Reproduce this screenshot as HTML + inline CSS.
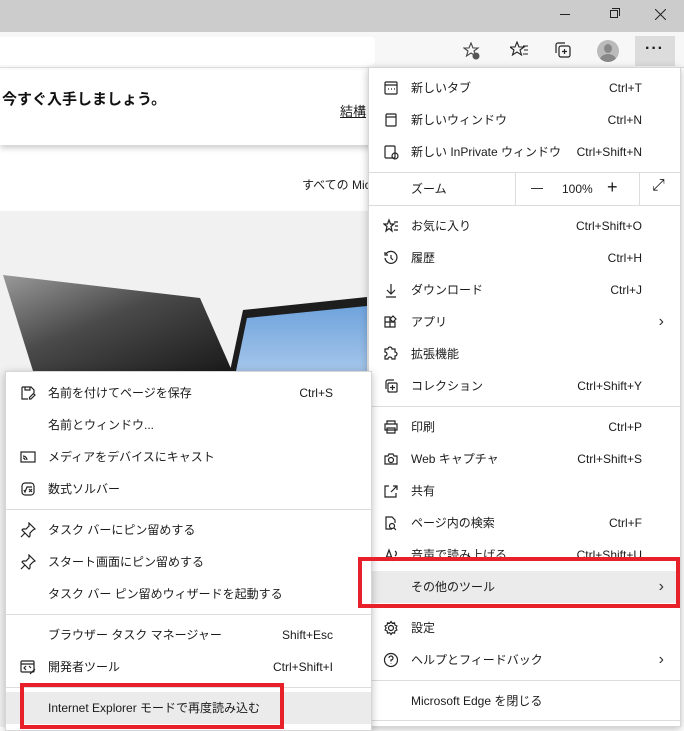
<!DOCTYPE html>
<html><head><meta charset="utf-8"><style>
*{margin:0;padding:0;box-sizing:border-box}
body{width:684px;height:727px;overflow:hidden;position:relative;background:#fff;font-family:"Liberation Sans","Noto Sans CJK JP",sans-serif;font-size:12px;color:#1b1b1b}
.a{position:absolute}
.menu{position:absolute;background:#fff;border:1px solid #d6d6d6;box-shadow:0 2px 8px rgba(0,0,0,.25)}
.it{position:absolute;left:0;right:0;height:32px;line-height:32px}
.it .t{position:absolute;left:42px}
.it .k{position:absolute;right:38px}
.it svg{position:absolute;left:14px;top:8px;width:16px;height:16px;fill:none;stroke:#222;stroke-width:1.2}
.sep{position:absolute;left:0;right:0;height:1px;background:#dcdcdc}
.hl{background:#ebebeb}
.chev{position:absolute;right:16px;top:0;color:#333;font-size:16px}
.red{position:absolute;border:4px solid #e8202a}
</style></head><body>
<div class="a" style="left:0;top:0;width:684px;height:32px;background:#cccccc"></div>
<div class="a" style="left:560px;top:14px;width:10px;height:1px;background:#222"></div>
<div class="a" style="left:610px;top:10px;width:8px;height:8px;border:1px solid #222"></div>
<div class="a" style="left:612px;top:8px;width:8px;height:8px;border-top:1px solid #222;border-right:1px solid #222"></div>
<svg class="a" style="left:655px;top:9px" width="11" height="11"><path d="M0 0L11 11M11 0L0 11" stroke="#222" stroke-width="1"/></svg>
<div class="a" style="left:0;top:32px;width:684px;height:36px;background:#f7f7f7;border-bottom:1px solid #ddd"></div>
<div class="a" style="left:0;top:37px;width:375px;height:28px;background:#fff;border-radius:0 4px 4px 0"></div>
<svg class="a" style="left:463px;top:42px" width="18" height="18" fill="none" stroke="#444" stroke-width="1.1"><path d="M8 1l2 5h5l-4 3 1.5 5L8 11l-4.5 3L5 9 1 6h5z"/><circle cx="13" cy="14" r="3.5" fill="#555" stroke="none"/></svg>
<svg class="a" style="left:510px;top:41px" width="20" height="18" fill="none" stroke="#222" stroke-width="1.1"><path d="M7 1l2 5h5l-4 3 1.5 5L7 11l-4.5 3L4 9 0 6h5z"/><path d="M13 5h5M14 9h4M13 13h5"/></svg>
<svg class="a" style="left:554px;top:41px" width="18" height="18" fill="none" stroke="#222" stroke-width="1.2"><rect x="5" y="5" width="11" height="11" rx="2"/><path d="M2 12V4a2 2 0 0 1 2-2h7M10.5 8v5M8 10.5h5"/></svg>
<div class="a" style="left:597px;top:40px;width:22px;height:22px;border-radius:50%;background:#bbb;overflow:hidden"><div class="a" style="left:7px;top:4px;width:8px;height:9px;border-radius:50%;background:#888"></div><div class="a" style="left:3px;top:14px;width:16px;height:12px;border-radius:50%;background:#888"></div></div>
<div class="a" style="left:635px;top:36px;width:40px;height:30px;background:#dcdcdc"></div>
<div class="a" style="left:645px;top:40px;font-size:16px;letter-spacing:1px;font-weight:bold">···</div>
<div class="a" style="left:0;top:70px;width:380px;height:75px;background:#fff;box-shadow:0 3px 6px rgba(0,0,0,.2)"></div>
<div class="a" style="left:2px;top:88px;font-size:15px;font-weight:bold;color:#111">今すぐ入手しましょう。</div>
<div class="a" style="left:340px;top:101px;font-size:13px;text-decoration:underline">結構</div>
<div class="a" style="left:302px;top:176px;font-size:12px">すべての Mic</div>
<div class="a" style="left:0;top:211px;width:370px;height:516px;background:#f1f1f1"></div>
<svg class="a" style="left:0;top:211px" width="370" height="170">
<defs><linearGradient id="g" x1="0" y1="0" x2="1" y2="1"><stop offset="0" stop-color="#999"/><stop offset=".45" stop-color="#4a4a4a"/><stop offset="1" stop-color="#1a1a1a"/></linearGradient>
<linearGradient id="b" x1="0" y1="0" x2="0" y2="1"><stop offset="0" stop-color="#6fa3dd"/><stop offset="1" stop-color="#a5c6ea"/></linearGradient></defs>
<polygon points="3,64 200,87 232,160 33,160" fill="url(#g)"/>
<polygon points="243,99 367,86 367,160 230,160" fill="#1d1d1d"/>
<polygon points="247,107 367,95 367,160 236,160" fill="url(#b)"/>
</svg>
<div class="menu" style="left:368px;top:67px;width:313px;height:660px">
<div class="it" style="top:4px"><svg viewBox="0 0 16 16"><rect x="2" y="2" width="12" height="12" rx="1"/><path d="M2 5h12M5 9h1M8 9h1M11 9h1"/></svg><span class="t">新しいタブ</span><span class="k">Ctrl+T</span></div>
<div class="it" style="top:36px"><svg viewBox="0 0 16 16"><rect x="3" y="2" width="10" height="12" rx="1"/><path d="M3 5h10"/></svg><span class="t">新しいウィンドウ</span><span class="k">Ctrl+N</span></div>
<div class="it" style="top:68px"><svg viewBox="0 0 16 16"><rect x="2" y="2" width="10" height="12" rx="1"/><circle cx="12" cy="12" r="3"/></svg><span class="t">新しい InPrivate ウィンドウ</span><span class="k">Ctrl+Shift+N</span></div>
<div class="sep" style="top:104px"></div>
<div class="it" style="top:105px"><span class="t">ズーム</span></div>
<div class="a" style="left:146px;top:105px;width:1px;height:32px;background:#dcdcdc"></div>
<div class="a" style="left:270px;top:105px;width:1px;height:32px;background:#dcdcdc"></div>
<div class="a" style="left:162px;top:120px;width:12px;height:1px;background:#333"></div>
<div class="a" style="left:193px;top:114px">100%</div>
<div class="a" style="left:238px;top:109px;font-size:18px">+</div>
<div class="a" style="left:283px;top:109px;font-size:16px">⤢</div>
<div class="sep" style="top:137px"></div>
<div class="it" style="top:142px"><svg viewBox="0 0 16 16"><path d="M6 2l1.5 4H11L8 8.5 9 13 6 10.5 3 13l1-4.5L1 6h3.5z"/><path d="M11 4h4M12 8h3M11 12h4"/></svg><span class="t">お気に入り</span><span class="k">Ctrl+Shift+O</span></div>
<div class="it" style="top:174px"><svg viewBox="0 0 16 16"><path d="M3 4a6 6 0 1 1-1 4M2 2v3h3"/><path d="M8 5v3l2 2"/></svg><span class="t">履歴</span><span class="k">Ctrl+H</span></div>
<div class="it" style="top:206px"><svg viewBox="0 0 16 16"><path d="M8 2v10M4 8l4 4 4-4M3 15h10"/></svg><span class="t">ダウンロード</span><span class="k">Ctrl+J</span></div>
<div class="it" style="top:238px"><svg viewBox="0 0 16 16"><path d="M2 3h5v5H2zM2 8h5v5H2zM7 8h5v5H7z"/><path d="M10 2l3 3-3 3-3-3z"/></svg><span class="t">アプリ</span><span class="chev">›</span></div>
<div class="it" style="top:270px"><svg viewBox="0 0 16 16"><path d="M5 3a2 2 0 0 1 4 0h3v3a2 2 0 0 1 0 4v3H9a2 2 0 0 0-4 0H2v-3a2 2 0 0 0 0-4V3z"/></svg><span class="t">拡張機能</span></div>
<div class="it" style="top:302px"><svg viewBox="0 0 16 16"><rect x="5" y="5" width="9" height="9" rx="1"/><path d="M3 11V4a2 2 0 0 1 2-2h6M9.5 7v5M7 9.5h5"/></svg><span class="t">コレクション</span><span class="k">Ctrl+Shift+Y</span></div>
<div class="sep" style="top:338px"></div>
<div class="it" style="top:343px"><svg viewBox="0 0 16 16"><path d="M4 5V2h8v3M2 5h12v6H2zM4 9h8v5H4z"/></svg><span class="t">印刷</span><span class="k">Ctrl+P</span></div>
<div class="it" style="top:375px"><svg viewBox="0 0 16 16"><path d="M2 5h3l1-2h4l1 2h3v8H2z"/><circle cx="8" cy="9" r="2.5"/></svg><span class="t">Web キャプチャ</span><span class="k">Ctrl+Shift+S</span></div>
<div class="it" style="top:407px"><svg viewBox="0 0 16 16"><path d="M6 3H2v11h11v-4M8 9l6-6M10 3h4v4"/></svg><span class="t">共有</span></div>
<div class="it" style="top:439px"><svg viewBox="0 0 16 16"><path d="M9 14H3V2h6l3 3v3"/><circle cx="9" cy="11" r="2.5"/><path d="M11 13l2 2"/></svg><span class="t">ページ内の検索</span><span class="k">Ctrl+F</span></div>
<div class="it" style="top:471px"><svg viewBox="0 0 16 16"><path d="M2 14L6 3l4 11M4 10h4M12 4a3 3 0 0 1 0 5"/></svg><span class="t">音声で読み上げる</span><span class="k">Ctrl+Shift+U</span></div>
<div class="it hl" style="top:503px;height:32px"><span class="t">その他のツール</span><span class="chev">›</span></div>
<div class="it" style="top:544px"><svg viewBox="0 0 16 16"><circle cx="8" cy="8" r="2.5"/><path d="M8 1.5l1.3 1.8 2.2-.5.4 2.2 2 1-1 2 1 2-2 1-.4 2.2-2.2-.5L8 14.5l-1.3-1.8-2.2.5-.4-2.2-2-1 1-2-1-2 2-1 .4-2.2 2.2.5z"/></svg><span class="t">設定</span></div>
<div class="it" style="top:576px"><svg viewBox="0 0 16 16"><circle cx="8" cy="8" r="6.5"/><path d="M6 6a2 2 0 1 1 2 2v1.5M8 11.5v.5"/></svg><span class="t">ヘルプとフィードバック</span><span class="chev">›</span></div>
<div class="sep" style="top:612px"></div>
<div class="it" style="top:617px"><span class="t">Microsoft Edge を閉じる</span></div>
<div class="sep" style="top:652px"></div>
</div>
<div class="menu" style="left:5px;top:371px;width:367px;height:360px">
<div class="it" style="top:5px"><svg viewBox="0 0 16 16"><path d="M2 2h9l3 3v3M2 2v12h6M5 2v3h5V2M11 14l4-4-1.5-1.5-4 4V14z"/></svg><span class="t">名前を付けてページを保存</span><span class="k">Ctrl+S</span></div>
<div class="it" style="top:37px"><span class="t">名前とウィンドウ...</span></div>
<div class="it" style="top:69px"><svg viewBox="0 0 16 16"><rect x="1" y="3" width="14" height="10"/><path d="M3 7a4 4 0 0 1 4 4M3 9a2 2 0 0 1 2 2"/></svg><span class="t">メディアをデバイスにキャスト</span></div>
<div class="it" style="top:101px"><svg viewBox="0 0 16 16"><rect x="2" y="2" width="12" height="12" rx="3"/><path d="M4 9l1 2 2-5h5M9 8l3 3M12 8l-3 3"/></svg><span class="t">数式ソルバー</span></div>
<div class="sep" style="top:137px"></div>
<div class="it" style="top:142px"><svg viewBox="0 0 16 16"><path d="M9 1l6 6-2 1-3 3v3l-1 1-7-7 1-1h3l3-3zM5 11l-4 4"/></svg><span class="t">タスク バーにピン留めする</span></div>
<div class="it" style="top:174px"><svg viewBox="0 0 16 16"><path d="M9 1l6 6-2 1-3 3v3l-1 1-7-7 1-1h3l3-3zM5 11l-4 4"/></svg><span class="t">スタート画面にピン留めする</span></div>
<div class="it" style="top:206px"><span class="t">タスク バー ピン留めウィザードを起動する</span></div>
<div class="sep" style="top:242px"></div>
<div class="it" style="top:247px"><span class="t">ブラウザー タスク マネージャー</span><span class="k">Shift+Esc</span></div>
<div class="it" style="top:279px"><svg viewBox="0 0 16 16"><rect x="1" y="2" width="13" height="11" rx="1"/><path d="M1 5h13M6 7l-2 2 2 2M9 7l2 2M10 15l5-5"/></svg><span class="t">開発者ツール</span><span class="k">Ctrl+Shift+I</span></div>
<div class="sep" style="top:315px"></div>
<div class="it hl" style="top:320px"><span class="t">Internet Explorer モードで再度読み込む</span></div>
</div>
<div class="red" style="left:358px;top:557px;width:322px;height:51px"></div>
<div class="red" style="left:20px;top:683px;width:264px;height:46px"></div>
</body></html>
